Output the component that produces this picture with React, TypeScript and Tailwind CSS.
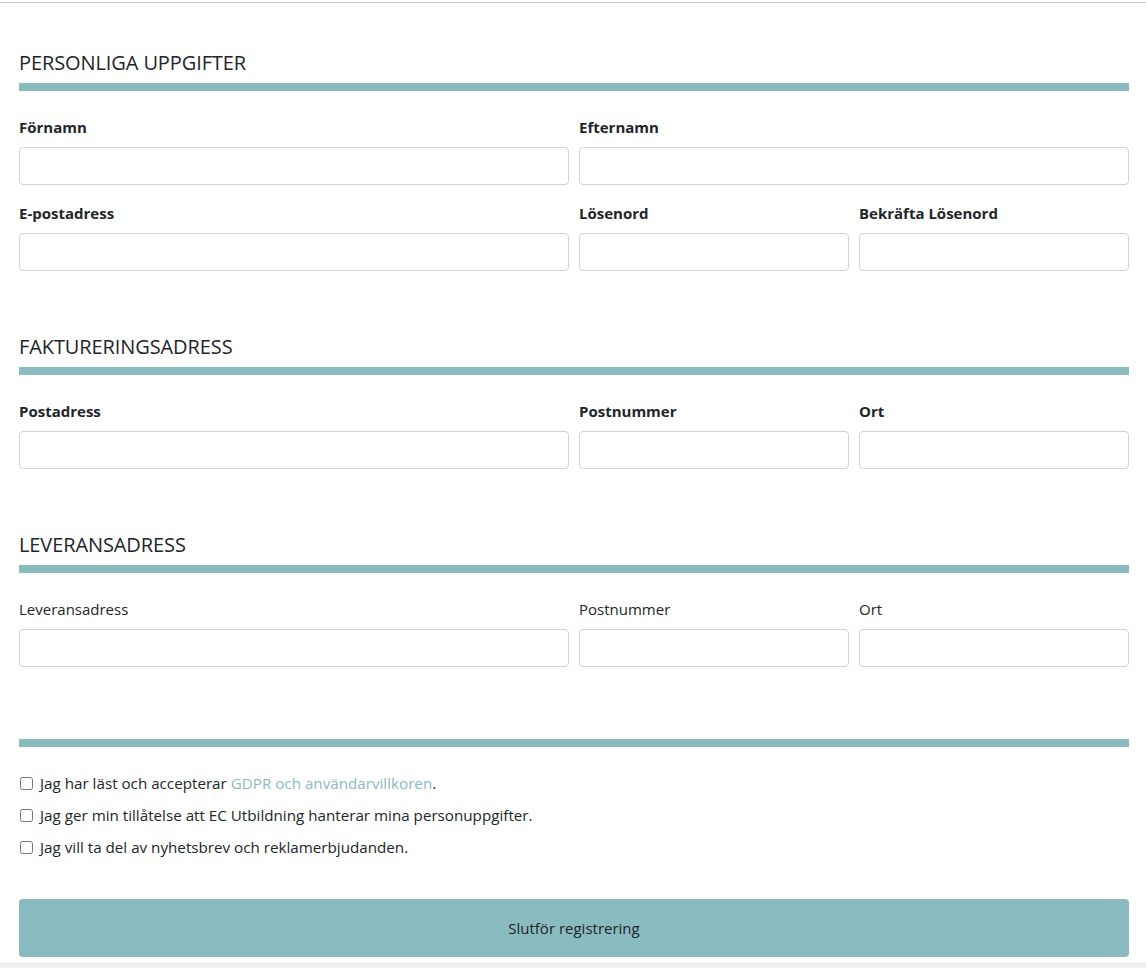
import React from "react";

const teal = "bg-[#8abbc1]";

function Field({ label, bold = true }: { label: string; bold?: boolean }) {
  return (
    <div className="flex flex-col">
      <label
        className={`text-[15px] leading-[24px] text-[#212529] ${bold ? "font-bold" : "font-normal"}`}
      >
        {label}
      </label>
      <input
        type="text"
        className="mt-[8px] h-[38px] w-full rounded-[4px] border border-[#ced4da] bg-white px-3 outline-none"
      />
    </div>
  );
}

function Heading({ children, top }: { children: React.ReactNode; top: string }) {
  return (
    <div className={top}>
      <h2 className="text-[20px] leading-[24px] font-normal tracking-[-0.1px] text-[#212529] uppercase">{children}</h2>
      <div className={`mt-[8px] h-[8px] w-full ${teal}`} />
    </div>
  );
}

function Check({ children }: { children: React.ReactNode }) {
  return (
    <label className="flex items-center text-[15.2px] leading-[24px] text-[#212529]">
      <input type="checkbox" className="ml-[1px] mr-[7px] h-[13px] w-[13px]" />
      <span>{children}</span>
    </label>
  );
}

export default function App() {
  return (
    <div className="relative h-[968px] w-full overflow-hidden bg-white font-['Open_Sans',sans-serif]">
      <div className="mt-[2px] h-px w-full bg-[#c8c8c8]" />
      <div className="ml-[19px] w-[1110px]">
        <Heading top="mt-[48px]">Personliga uppgifter</Heading>
        <div className="mt-[24px] grid grid-cols-[550px_270px_270px] gap-x-[10px] gap-y-[16px]">
          <Field label="Förnamn" />
          <div className="col-span-2">
            <Field label="Efternamn" />
          </div>
          <Field label="E-postadress" />
          <Field label="Lösenord" />
          <Field label="Bekräfta Lösenord" />
        </div>

        <Heading top="mt-[64px]">Faktureringsadress</Heading>
        <div className="mt-[24px] grid grid-cols-[550px_270px_270px] gap-x-[10px]">
          <Field label="Postadress" />
          <Field label="Postnummer" />
          <Field label="Ort" />
        </div>

        <Heading top="mt-[64px]">Leveransadress</Heading>
        <div className="mt-[24px] grid grid-cols-[550px_270px_270px] gap-x-[10px]">
          <Field label="Leveransadress" bold={false} />
          <Field label="Postnummer" bold={false} />
          <Field label="Ort" bold={false} />
        </div>

        <div className={`mt-[72px] h-[8px] w-full ${teal}`} />

        <div className="mt-[24px] flex flex-col gap-[8px]">
          <Check>
            Jag har läst och accepterar{" "}
            <a className="text-[#8abbc1]" href="#">
              GDPR och användarvillkoren
            </a>
            .
          </Check>
          <Check>Jag ger min tillåtelse att EC Utbildning hanterar mina personuppgifter.</Check>
          <Check>Jag vill ta del av nyhetsbrev och reklamerbjudanden.</Check>
        </div>

        <button
          type="button"
          className={`mt-[40px] flex h-[58px] w-full items-center justify-center rounded-[4px] ${teal} text-[15px] text-[#212529]`}
        >
          Slutför registrering
        </button>
      </div>
      <div className="absolute bottom-0 left-0 h-[5px] w-full border-t border-[#e6e6e6] bg-[#f1f1f1]" />
    </div>
  );
}
